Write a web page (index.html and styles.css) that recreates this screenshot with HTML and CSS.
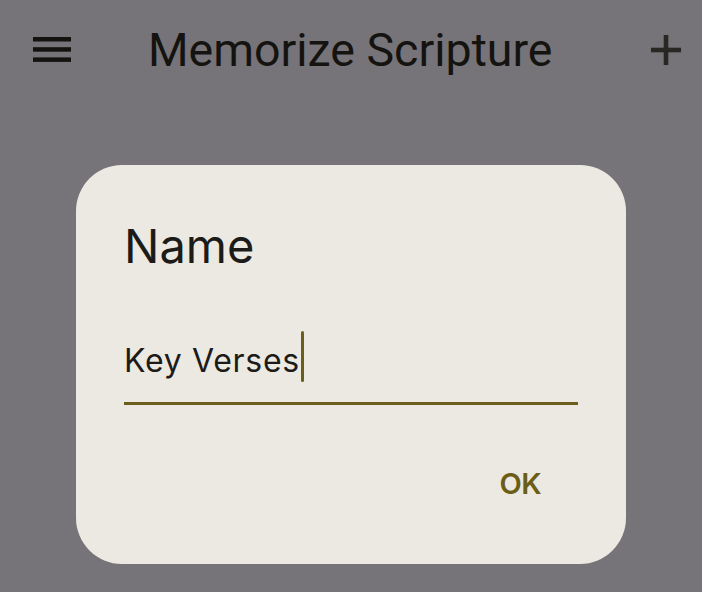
FILE: index.html
```html
<!DOCTYPE html>
<html>
<head>
<meta charset="utf-8">
<link rel="stylesheet" href="styles.css">
</head>
<body>
<div class="screen">
  <header class="appbar">
    <svg class="menu" width="38" height="25" viewBox="0 0 38 25"><rect x="0" y="0" width="38" height="4.5" fill="#141310"/><rect x="0" y="10.2" width="38" height="4.5" fill="#141310"/><rect x="0" y="20.4" width="38" height="4.5" fill="#141310"/></svg>
    <h1 class="title">Memorize Scripture</h1>
    <svg class="plus" width="30" height="30" viewBox="0 0 30 30"><rect x="12.7" y="0" width="4.6" height="30" fill="#292724"/><rect x="0" y="12.7" width="30" height="4.6" fill="#292724"/></svg>
  </header>
  <div class="dialog">
    <div class="dlg-title">Name</div>
    <div class="field">
      <span class="value">Key Verses</span><span class="caret"></span>
    </div>
    <div class="actions"><span class="ok">OK</span></div>
  </div>
</div>
</body>
</html>
```
FILE: styles.css
```css
html, body { margin: 0; padding: 0; }
body { background: #767478; width: 702px; height: 592px; overflow: hidden; }
.screen { width: 702px; height: 592px; display: flex; flex-direction: column; align-items: center; }
.appbar { width: 100%; height: 100px; display: flex; align-items: flex-start; box-sizing: border-box; padding: 37px 21px 0 33px; }
.menu { display: block; flex: none; }
.title { margin: -13px 0 0 77px; font-family: Roboto, sans-serif; font-weight: 400; font-size: 46.5px; line-height: 52px; color: #141310; flex: 1; }
.plus { display: block; flex: none; margin-top: -2px; }
.dialog { margin-top: 65px; width: 550px; height: 399px; background: #ECE9E3; border-radius: 46px; box-sizing: border-box; padding: 0 48px; font-family: Inter, sans-serif; }
.dlg-title { font-size: 47px; line-height: 58px; color: #1c1b18; margin-top: 52px; }
.field { margin-top: 50px; border-bottom: 3.5px solid #6B5E1A; height: 80px; box-sizing: border-box; display: flex; align-items: flex-start; }
.value { font-size: 32px; line-height: 44px; color: #1c1b18; letter-spacing: 0.7px; margin-top: 14px; }
.caret { width: 3px; height: 51px; background: #6B5E1A; border-radius: 1.5px; margin-left: 1px; margin-top: 6px; }
.actions { display: flex; justify-content: flex-end; padding-right: 37px; margin-top: 61px; }
.ok { font-size: 29px; font-weight: 600; color: #6B5E16; line-height: 36px; letter-spacing: -0.6px; }
```
